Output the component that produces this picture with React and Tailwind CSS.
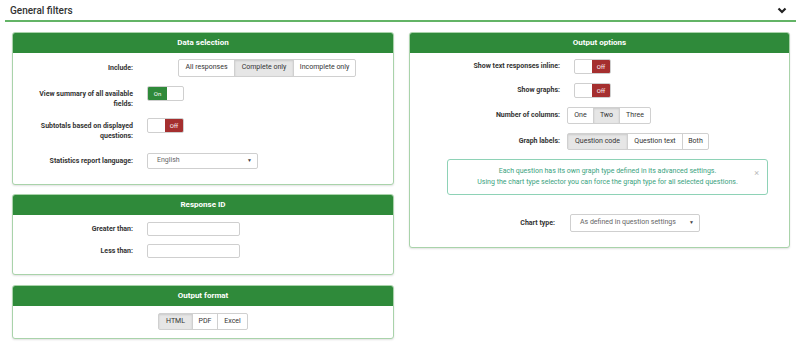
import React from "react";

const Panel = ({ title, children, className = "" }) => (
  <div className={`border border-[#a9d3aa] rounded-[3px] bg-white shadow-[0_1px_2px_rgba(0,0,0,0.12)] overflow-hidden ${className}`}>
    <div className="h-[20px] bg-[#2f8a3a] text-white font-bold text-[8px] flex items-center justify-center">{title}</div>
    {children}
  </div>
);

const Toggle = ({ on }) => (
  <div className="w-[37px] h-[15px] border border-[#cfcfcf] rounded-[2px] flex bg-white overflow-hidden">
    {on ? (
      <>
        <div className="w-[19px] bg-[#2f8a3a] text-white text-[6px] flex items-center justify-center">On</div>
        <div className="flex-1" />
      </>
    ) : (
      <>
        <div className="flex-1" />
        <div className="w-[18px] bg-[#a52f2f] text-white text-[6px] flex items-center justify-center">Off</div>
      </>
    )}
  </div>
);

const Group = ({ items, active, widths, h = "h-[18px]" }) => (
  <div className={`flex border border-[#d0d0d0] rounded-[2px] bg-white ${h}`}>
    {items.map((it, i) => (
      <div
        key={it}
        style={{ width: widths[i] }}
        className={`flex items-center justify-center text-[7px] text-[#333] ${i > 0 ? "border-l border-[#d0d0d0]" : ""} ${i === active ? "bg-[#e6e6e6] shadow-[inset_0_1px_2px_rgba(0,0,0,0.12)]" : ""}`}
      >
        {it}
      </div>
    ))}
  </div>
);

const Label = ({ children, w, className = "", inner }) => (
  <div className={`flex justify-end shrink-0 ${className}`} style={{ width: w }}>
    <div className="text-right font-bold text-[7px] leading-[10px] text-[#333]" style={inner ? { width: inner } : undefined}>
      {children}
    </div>
  </div>
);

const Select = ({ text, w, h }) => (
  <div className={`border border-[#cfcfcf] rounded-[2px] bg-white flex items-center justify-between pl-[9px] pr-[5px] text-[7px] text-[#666]`} style={{ width: w, height: h }}>
    <span>{text}</span>
    <span className="text-[5px] text-[#444]">▼</span>
  </div>
);

export default function App() {
  return (
    <div className="w-[800px] h-[351px] bg-white overflow-hidden font-['Roboto',sans-serif]">
      <div className="flex items-center justify-between h-[20px] pl-[10px] pr-[13px]">
        <span className="text-[10px] font-medium text-[#333]">General filters</span>
        <svg width="10" height="7" viewBox="0 0 10 7">
          <polyline points="1.5,1.5 5,5 8.5,1.5" fill="none" stroke="#222" strokeWidth="2.2" />
        </svg>
      </div>
      <div className="ml-[5px] mr-[4px] h-[1.5px] bg-[#63b466]" />
      <div className="flex gap-[15px] pl-[12px] mt-[10px]">
        <div className="w-[382px] flex flex-col">
          <Panel title="Data selection" className="h-[153px]">
            <div className="flex flex-col pt-[6px]">
              <div className="flex items-center h-[18px]">
                <Label w={120}>Include:</Label>
                <div className="ml-[45px]">
                  <Group items={["All responses", "Complete only", "Incomplete only"]} active={1} widths={[55, 59, 62]} />
                </div>
              </div>
              <div className="flex mt-[9px] items-start">
                <Label w={120} inner={98} className="pt-[3px]">View summary of all available fields:</Label>
                <div className="ml-[14px]"><Toggle on /></div>
              </div>
              <div className="flex mt-[9px] items-start">
                <Label w={120} inner={98} className="pt-[3px]">Subtotals based on displayed questions:</Label>
                <div className="ml-[14px]"><Toggle /></div>
              </div>
              <div className="flex mt-[12px] items-center">
                <Label w={120}>Statistics report language:</Label>
                <div className="ml-[14px]"><Select text="English" w={111} h={16} /></div>
              </div>
            </div>
          </Panel>
          <Panel title="Response ID" className="h-[81px] mt-[9px]">
            <div className="flex flex-col pt-[7px]">
              <div className="flex items-center">
                <Label w={120}>Greater than:</Label>
                <div className="ml-[14px] w-[93px] h-[14px] border border-[#cfcfcf] rounded-[2px]" />
              </div>
              <div className="flex items-center mt-[8px]">
                <Label w={120}>Less than:</Label>
                <div className="ml-[14px] w-[93px] h-[14px] border border-[#cfcfcf] rounded-[2px]" />
              </div>
            </div>
          </Panel>
          <Panel title="Output format" className="h-[54px] mt-[10px]">
            <div className="flex justify-center pt-[7px]">
              <Group items={["HTML", "PDF", "Excel"]} active={0} widths={[33, 25, 30]} h="h-[17px]" />
            </div>
          </Panel>
        </div>
        <div className="w-[381px]">
          <Panel title="Output options" className="h-[216px]">
            <div className="flex flex-col pt-[6px]">
              <div className="flex items-center">
                <Label w={150}>Show text responses inline:</Label>
                <div className="ml-[14px]"><Toggle /></div>
              </div>
              <div className="flex items-center mt-[9px]">
                <Label w={150}>Show graphs:</Label>
                <div className="ml-[14px]"><Toggle /></div>
              </div>
              <div className="flex items-center mt-[9px]">
                <Label w={150}>Number of columns:</Label>
                <div className="ml-[7px]"><Group items={["One", "Two", "Three"]} active={1} widths={[25, 26, 31]} h="h-[17px]" /></div>
              </div>
              <div className="flex items-center mt-[9px]">
                <Label w={150}>Graph labels:</Label>
                <div className="ml-[7px]"><Group items={["Question code", "Question text", "Both"]} active={0} widths={[59, 55, 26]} h="h-[17px]" /></div>
              </div>
              <div className="relative ml-[37px] mt-[9px] w-[321px] h-[36px] border border-[#8ed2b6] rounded-[3px] flex flex-col items-center justify-center text-[7px] leading-[11px] text-[#3aa27e]">
                <span>Each question has its own graph type defined in its advanced settings.</span>
                <span>Using the chart type selector you can force the graph type for all selected questions.</span>
                <span className="absolute right-[8px] top-[8px] text-[9px] text-[#bbb]">×</span>
              </div>
              <div className="flex items-center mt-[19px]">
                <Label w={145}>Chart type:</Label>
                <div className="ml-[15px]"><Select text="As defined in question settings" w={130} h={18} /></div>
              </div>
            </div>
          </Panel>
        </div>
      </div>
    </div>
  );
}
